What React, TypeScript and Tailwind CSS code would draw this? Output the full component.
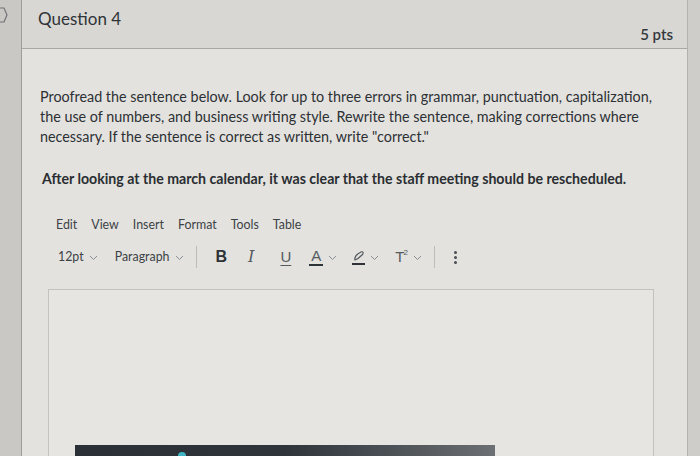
import React from "react";

const Chev = () => (
  <svg width="9" height="6" viewBox="0 0 9 6" className="ml-[5px] mt-[2px]">
    <path d="M1 1 L4.5 4.5 L8 1" fill="none" stroke="#8a8f94" strokeWidth="1" />
  </svg>
);

export default function App() {
  return (
    <div
      className="relative w-[700px] h-[456px] overflow-hidden bg-[#cfcdc9] flex"
      style={{ fontFamily: "Lato, 'Open Sans', sans-serif" }}
    >
      {/* left strip */}
      <div className="w-[22px] shrink-0 bg-[#cac8c4] border-r border-[#9e9d99] relative">
        <svg width="12" height="20" viewBox="0 0 12 20" className="absolute left-[-2px] top-[5px]">
          <path d="M1 3 L6 3 L9 10 L6 17 L1 17" fill="none" stroke="#6f7275" strokeWidth="1.2" />
        </svg>
      </div>

      {/* card */}
      <div className="w-[666px] shrink-0 flex flex-col bg-[#e3e2de] border-r border-[#b3b2ae]">
        {/* header */}
        <div className="h-[49px] shrink-0 bg-[#d8d7d3] border-b border-[#a8a7a3] flex justify-between pl-[16px] pr-[14px]">
          <div className="pt-[8px] text-[17px] text-[#2f3337] leading-[22px]">Question 4</div>
          <div className="self-end pb-[4px] text-[15px] text-[#34383c] font-semibold leading-[20px]">5 pts</div>
        </div>

        {/* body */}
        <div className="flex-1 flex flex-col pl-[18px]">
          <p className="mt-[38px] text-[14.35px] leading-[20px] text-[#2d3135]">
            Proofread the sentence below. Look for up to three errors in grammar, punctuation, capitalization,
            <br />
            the use of numbers, and business writing style. Rewrite the sentence, making corrections where
            <br />
            necessary. If the sentence is correct as written, write "correct."
          </p>
          <p className="mt-[22px] pl-[2px] text-[14.15px] leading-[20px] font-bold text-[#2a2e32]">
            After looking at the march calendar, it was clear that the staff meeting should be rescheduled.
          </p>

          {/* editor */}
          <div className="mt-[28px] pl-[16px] flex gap-[14px] text-[12.4px] text-[#3d4247] leading-[16px]">
            <span>Edit</span>
            <span>View</span>
            <span>Insert</span>
            <span>Format</span>
            <span>Tools</span>
            <span>Table</span>
          </div>
          <div className="mt-[13px] pl-[18px] flex items-center h-[22px] text-[12.4px] text-[#3d4247]">
            <span className="flex items-center">12pt<Chev /></span>
            <span className="flex items-center ml-[17px]">Paragraph<Chev /></span>
            <span className="ml-[12px] w-px h-[22px] bg-[#bdbcb8]" />
            <span className="ml-[19px] text-[16px] font-bold text-[#2f3337]" style={{ fontFamily: "'Liberation Sans', sans-serif" }}>B</span>
            <span className="ml-[21px] text-[16px] italic text-[#555a5f]" style={{ fontFamily: "'DejaVu Serif', serif", fontWeight: 300 }}>I</span>
            <span className="ml-[26px] text-[15px] text-[#555a5f] underline underline-offset-[3px]" style={{ fontFamily: "'Liberation Sans', sans-serif" }}>U</span>
            <span className="ml-[18px] flex items-center">
              <span className="flex flex-col items-center">
                <span className="text-[15px] leading-[14px] text-[#555a5f]" style={{ fontFamily: "'Liberation Sans', sans-serif" }}>A</span>
                <span className="w-[14px] h-[2px] bg-[#2f3337] mt-[1px]" />
              </span>
              <Chev />
            </span>
            <span className="ml-[15px] flex items-center">
              <span className="flex flex-col items-center">
                <svg width="13" height="12" viewBox="0 0 13 12">
                  <path d="M3 10 C2 7 5 4 9 2 C11 1 12 3 10 5 C8 7 6 9 3 10 Z" fill="none" stroke="#555a5f" strokeWidth="1.2" />
                </svg>
                <span className="w-[13px] h-[2px] bg-[#2f3337] mt-[1px]" />
              </span>
              <Chev />
            </span>
            <span className="ml-[16px] flex items-center text-[15px] text-[#555a5f]" style={{ fontFamily: "'Liberation Sans', sans-serif" }}>
              T<sup className="text-[8px] -ml-[1px]">2</sup>
              <Chev />
            </span>
            <span className="ml-[12px] w-px h-[22px] bg-[#bdbcb8]" />
            <span className="ml-[19px] flex flex-col gap-[2px]">
              <span className="w-[3px] h-[3px] rounded-full bg-[#4a4f54]" />
              <span className="w-[3px] h-[3px] rounded-full bg-[#4a4f54]" />
              <span className="w-[3px] h-[3px] rounded-full bg-[#4a4f54]" />
            </span>
          </div>

          <div className="mt-[21px] ml-[8px] w-[606px] flex-1 border border-[#c3c2be] border-b-0 bg-[#e6e5e1]" />
        </div>
      </div>

      {/* bottom bezel */}
      <div className="absolute left-[75px] bottom-0 w-[420px] h-[11px] bg-gradient-to-r from-[#2b3036] via-[#2e343a] to-[#6c7074]" />
      <div className="absolute left-[178px] bottom-0 w-[8px] h-[4px] bg-[#3fb5c4] rounded-t" />
    </div>
  );
}
